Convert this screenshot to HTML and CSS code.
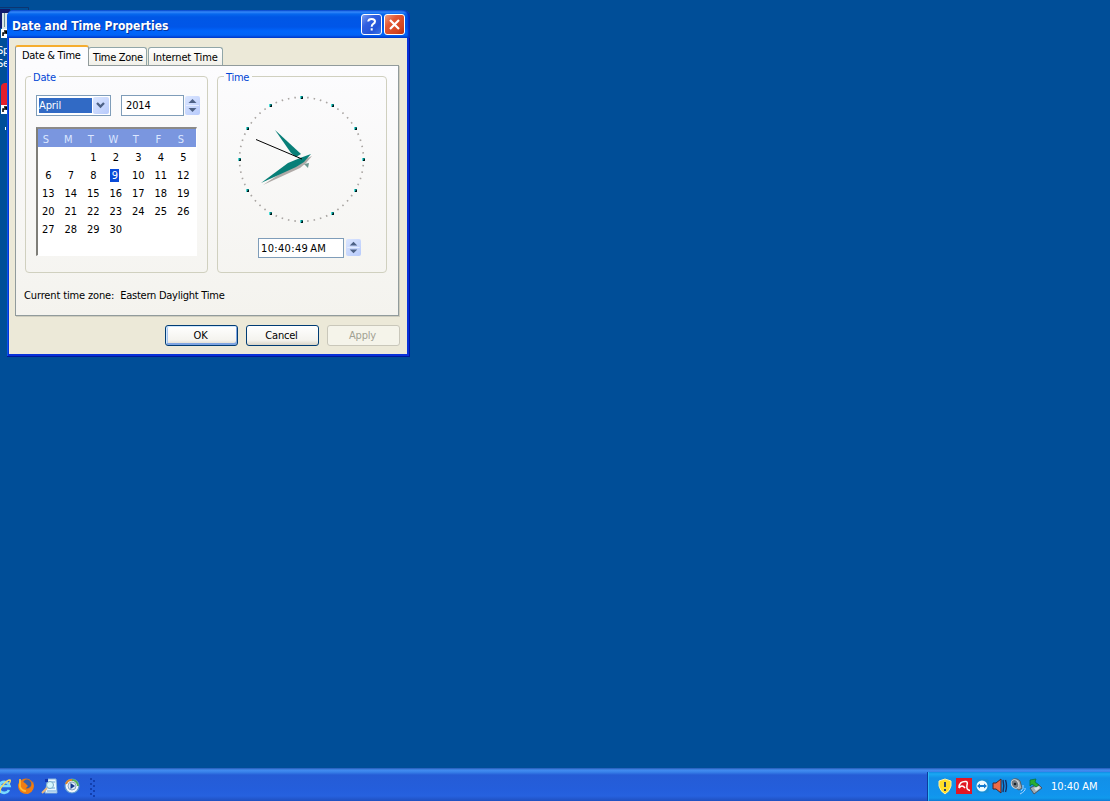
FILE: index.html
```html
<!DOCTYPE html>
<html lang="en">
<head>
<meta charset="utf-8">
<title>Date and Time Properties</title>
<link rel="stylesheet" href="styles.css">
</head>
<body>
<main class="desktop">
  <div class="shortcuts">
    <svg class="shortcut-art" width="30" height="140" viewBox="0 0 30 140">
      <path d="M0 7.500H28.500V11" fill="none" stroke="#102d63" stroke-opacity=".75"/>
      <path d="M0 9H10V28H0z" fill="#101b6b"/><path d="M2 13H8V29H2z" fill="#d8e6e8"/><path d="M4 13H5V27H4z" fill="#6d9196"/>
      <path d="M1 29H8V38H1z" fill="#fff"/><path d="M3 36V33H6V31M4 31H7V34" fill="none" stroke="#000" stroke-width="1.500"/>
      <path d="M1 86Q2 83 5 83H8V105H1z" fill="#e4202b"/>
      <path d="M1 105H8V114H1z" fill="#fff"/><path d="M3 112V109H6V107M4 107H7V110" fill="none" stroke="#000" stroke-width="1.500"/>
      <path d="M5 127H6V130H5z" fill="#fff"/>
    </svg>
    <div class="shortcut-label">Sp<br>Se</div>
  </div>

  <section class="window">
    <header class="titlebar">
      <h1 class="title">Date and Time Properties</h1>
      <div class="caption help"><svg width="19" height="19" viewBox="0 0 19 19"><path d="M6.200 6.500Q6.500 4 9.700 4Q13 4 13 6.600Q13 8.100 11 9.100Q9.700 9.900 9.700 11.800M9.700 13.200V15.400" fill="none" stroke="#fff" stroke-width="2"/></svg></div>
      <div class="caption close"><svg width="19" height="19" viewBox="0 0 19 19"><path d="M5 5L14 14M14 5L5 14" stroke="#fff" stroke-width="2.200"/></svg></div>
    </header>
    <div class="body">
      <nav class="tabs">
        <div class="tab active">Date &amp; Time</div>
        <div class="tab zone">Time Zone</div>
        <div class="tab internet">Internet Time</div>
      </nav>
      <div class="panel">
        <div class="groups">
          <div class="group date-group">
            <div class="legend">Date</div>
            <div class="pickers">
              <div class="combo"><span class="month">April</span><span class="drop"><svg width="15" height="17" viewBox="0 0 15 17"><path d="M4 6L7.500 9.500L11 6" fill="none" stroke="#4d6185" stroke-width="2.300"/></svg></span></div>
              <div class="field year">2014</div>
              <div class="spinner"><svg width="15" height="19" viewBox="0 0 15 19"><path d="M3.500 7L7.500 3L11.500 7zM3.500 12L7.500 16L11.500 12z" fill="#4d6185"/><path d="M1 9.500H14" stroke="#e6eeff"/></svg></div>
            </div>
            <div class="calendar">
              <div class="week head"><span>S</span><span>M</span><span>T</span><span>W</span><span>T</span><span>F</span><span>S</span></div>
              <div class="week"><span></span><span></span><span>1</span><span>2</span><span>3</span><span>4</span><span>5</span></div>
              <div class="week"><span>6</span><span>7</span><span>8</span><span><b class="today">9</b></span><span>10</span><span>11</span><span>12</span></div>
              <div class="week"><span>13</span><span>14</span><span>15</span><span>16</span><span>17</span><span>18</span><span>19</span></div>
              <div class="week"><span>20</span><span>21</span><span>22</span><span>23</span><span>24</span><span>25</span><span>26</span></div>
              <div class="week"><span>27</span><span>28</span><span>29</span><span>30</span></div>
            </div>
          </div>
          <div class="group time-group">
            <div class="legend">Time</div>
            <svg class="clock" width="132" height="132" viewBox="236 93 132 132">
              <circle cx="301.500" cy="159.300" r="62" fill="none" stroke="#aaa6a3" stroke-width="1.700" pathLength="60" stroke-dasharray="0 .88 .24 0 0 .76 .24 0 0 .76 .24 0 0 .76 .24 .88"/>
              <defs><g id="mark"><path d="M-2-1H0V2H-2z" fill="#4ed9d5"/><path d="M-1-1H1V1H-1z" fill="#087f7c"/><path d="M0 0H1V2H-1V1H0z" fill="#001b1c"/></g></defs>
              <use href="#mark" x="302" y="97"/><use href="#mark" x="333" y="105"/><use href="#mark" x="356" y="128"/><use href="#mark" x="364" y="159"/><use href="#mark" x="356" y="190"/><use href="#mark" x="333" y="213"/><use href="#mark" x="302" y="221"/><use href="#mark" x="271" y="213"/><use href="#mark" x="248" y="190"/><use href="#mark" x="240" y="159"/><use href="#mark" x="248" y="128"/><use href="#mark" x="271" y="105"/>
              <path d="M263 185L296 163L312 156L306 163L300 168z" fill="#b0aaa7"/>
              <path d="M304 164L309 163L308 168z" fill="#6d9790"/>
              <path d="M275 130L301 154L296 157L291 153z" fill="#087f78"/>
              <path d="M261 183L288 163L300 158L311 154L304 162L296 167z" fill="#087f78"/>
              <path d="M256 139.500L302 159" stroke="#000"/>
            </svg>
            <div class="time-row">
              <div class="field time-field">10:40:49 AM</div>
              <div class="spinner time-spin"><svg width="15" height="17" viewBox="0 0 15 18"><path d="M3.500 7L7.500 3L11.500 7zM3.500 11L7.500 15L11.500 11z" fill="#4d6185"/><path d="M1 9H14" stroke="#e6eeff"/></svg></div>
            </div>
          </div>
        </div>
        <div class="zone-line"><span>Current time zone:</span><span class="zone-name">Eastern Daylight Time</span></div>
      </div>
      <footer class="buttons">
        <div class="button default">OK</div>
        <div class="button">Cancel</div>
        <div class="button disabled">Apply</div>
      </footer>
    </div>
  </section>

  <div class="taskbar">
    <svg class="quick" width="104" height="33" viewBox="0 768 104 33">
      <path d="M9 790A5.500 5.500 0 1 1 9.500 786H0" fill="none" stroke="#78d9ff" stroke-width="2.600"/><path d="M0 793Q-1 789 3 785Q7 780 10 780Q11 781 9 784" fill="none" stroke="#f2d765" stroke-width="1.400"/>
      <circle cx="26" cy="786" r="7.500" fill="#ea7610"/><circle cx="27" cy="784" r="4.400" fill="#365fa9"/><path d="M20 780L25 783L28 786L25 789Q31 791 32 784L33 781Q36 791 28 794Q18 794 18 785z" fill="#f07d12"/><path d="M20 779V787Q22 791 26 791" fill="none" stroke="#ffbd35" stroke-width="1.700"/>
      <path d="M48 779H56L57 793H45z" fill="#eaf7ff" stroke="#8ab7dd"/><path d="M48 782H55M48 788H55M47 791H56" stroke="#66a5dc"/><circle cx="50" cy="785" r="3.500" fill="#d4f6ff" stroke="#7baac4"/><path d="M47 788L42 793" stroke="#e9b67c" stroke-width="2"/><path d="M45 779H48V782H45z" fill="#1236b0"/>
      <circle cx="72" cy="786" r="7" fill="#f0f5fa" stroke="#5b99d3" stroke-width="1.200"/><path d="M66 784A6 6 0 0 1 72 780" fill="none" stroke="#dc852f" stroke-width="2"/><path d="M72 780A6 6 0 0 1 78 786" fill="none" stroke="#58ae58" stroke-width="2"/><circle cx="72" cy="786" r="4" fill="#dceaf8" stroke="#89a5c4"/><path d="M70.500 783L75 786L70.500 789z" fill="#14388c"/>
      <path d="M90 778h2v2h-2zM93 780h2v2h-2zM90 783h2v2h-2zM93 785h2v2h-2zM90 788h2v2h-2zM93 790h2v2h-2zM90 793h2v2h-2zM93 795h2v2h-2z" fill="#123fae"/>
    </svg>
    <div class="tray">
      <svg width="119" height="29" viewBox="928 772 119 29">
        <path d="M945 779L951 781V786Q950 791 945 794Q940 791 939 786V781z" fill="#ffdf29" stroke="#fff0a5"/><path d="M945 782V787M945 789V791" stroke="#17346e" stroke-width="1.800"/>
        <path d="M956 778H972V794H956z" fill="#e21624"/><path d="M959 788Q959 781 966 781.500Q968 782 967 785Q966 790 970 790.500M959 788Q962 784 965 788" fill="none" stroke="#fff" stroke-width="1.500"/>
        <rect x="976" y="779" width="13" height="14" rx="3" fill="#168ed7"/><circle cx="982" cy="786" r="5.500" fill="#eefcff"/><path d="M977 786L980 783.500V785H984V783.500L987 786L984 788.500V787H980V788.500z" fill="#137bce"/>
        <path d="M993 783H996L1001 779V793L996 789H993z" fill="#ed6b46" stroke="#49252b"/><path d="M1003 780Q1004.500 786 1003 792M1005.500 780Q1007.500 786 1005.500 792" fill="none" stroke="#182f61" stroke-width="1.400"/>
        <path d="M1012 780Q1016 777 1020 781L1022 788L1019 790L1012 786z" fill="#a7adb0" stroke="#555e67"/><ellipse cx="1015" cy="784" rx="3.500" ry="4.500" fill="#737b82" stroke="#d4d8dd" transform="rotate(-25 1015 784)"/><circle cx="1015" cy="784" r="1.300" fill="#17212b"/><path d="M1021 791Q1024 789 1023 785M1020 794Q1026 791 1025 788" fill="none" stroke="#a9d4ff"/>
        <path d="M1030 788L1038 784L1042 788L1034 794z" fill="#a1adb4" stroke="#46566a"/><path d="M1034 788L1038 786L1040 788L1036 791z" fill="#dce4e7"/><path d="M1030 780L1036 779L1035 782L1039 785L1036 787L1032 784L1030 786z" fill="#29ad31" stroke="#087340" stroke-width=".8"/>
      </svg>
      <time class="tray-clock">10:40 AM</time>
    </div>
  </div>
</main>
</body>
</html>
```
FILE: styles.css
```css
* { box-sizing: border-box; }
body { margin: 0; font: 11px/13px "DejaVu Sans Condensed", "DejaVu Sans", sans-serif; font-stretch: condensed; letter-spacing: -.3px; color: #000; }
svg { display: block; flex: none; }
.desktop { position: relative; width: 1110px; height: 801px; overflow: hidden; background: #004e98; display: flex; flex-direction: column; justify-content: flex-end; }
.shortcuts { position: absolute; left: 0; top: 0; }
.shortcut-label { position: absolute; left: -3px; top: 44px; color: #fff; }

.window { position: absolute; left: 7px; top: 10px; width: 403px; height: 347px; padding: 0 3px 3px 2px; border-radius: 7px 7px 0 0; background: #0831d9; box-shadow: inset -1px -1px #001899, inset 1px 0 #0855e8; display: flex; flex-direction: column; }
.titlebar { height: 28px; margin: 0 -3px 0 -2px; padding: 4px 5px 0; border-radius: 7px 7px 0 0; display: flex; background: linear-gradient(#0a54d5, #3588fa 2px, #0668ee 4px, #0057e6 7px, #0056e8 17px, #0065fc 21px, #0263f6 25px, #003dce); box-shadow: inset -2px 0 2px #0030bb; }
.title { flex: 1; margin: 4px 0 0; font: bold 12px/16px "DejaVu Sans Condensed", "DejaVu Sans", sans-serif; letter-spacing: .02px; color: #fff; text-shadow: 1px 1px #06349d; white-space: nowrap; }
.caption { width: 21px; height: 21px; border: 1px solid #fff; border-radius: 3px; margin-left: 2px; }
.help { background: linear-gradient(135deg, #7d9ef0, #315fe0 35%, #2454d8 70%, #3c77e9); }
.close { background: linear-gradient(135deg, #ef9c80, #e35734 35%, #d54520 75%, #b92d10); }
.body { flex: 1; background: #ece9d8; padding: 7px 8px 0 6px; }
.tabs { height: 20px; display: flex; align-items: flex-end; }
.tab { height: 18px; padding: 3px 0 0 4px; border: 1px solid #91a6a8; border-bottom: 0; border-radius: 3px 3px 0 0; background: linear-gradient(#fff, #f1f0e9); white-space: nowrap; }
.tab.active { position: relative; z-index: 1; width: 74px; height: 21px; margin-bottom: -1px; padding: 1px 0 0 6px; border-color: #919b9c; border-top: 2px solid #f5ad30; background: #fcfcfe; }
.tab.active { padding-top: 2px; }
.zone { width: 59px; margin-left: -1px; }
.internet { width: 75px; margin-left: 1px; letter-spacing: -.15px; }
.panel { width: 384px; height: 251px; padding: 10px 10px 0 9px; border: 1px solid #919b9c; box-shadow: 1px 1px #cfcdbe; background: linear-gradient(#fcfcfe, #f4f3ee); }
.groups { display: flex; gap: 9px; }
.group { height: 197px; border: 1px solid #d0d0bf; border-radius: 4px; }
.date-group { width: 183px; padding-left: 10px; }
.time-group { width: 170px; display: flex; flex-direction: column; }
.legend { width: max-content; margin: -6px 0 0 -5px; padding: 0 3px 0 2px; background: #fbfbfd; color: #0046d5; letter-spacing: -.2px; }
.time-group .legend { margin-left: 6px; letter-spacing: -.25px; }
.pickers { height: 21px; margin-top: 11px; display: flex; }
.combo { width: 75px; height: 21px; border: 1px solid #7f9db9; background: #fff; padding: 2px 1px; display: flex; justify-content: space-between; }
.month { width: 53px; height: 15px; margin-left: 1px; padding: 1px 0; color: #fff; background: #316ac5; letter-spacing: -.1px; }
.drop, .spinner { background: linear-gradient(135deg, #dbe6ff, #b7cafb); border-radius: 2px; }
.drop { width: 16px; height: 17px; margin-top: -1px; }
.field { border: 1px solid #7f9db9; background: #fff; }
.year { width: 63px; margin-left: 10px; padding: 3px 4px; letter-spacing: -.15px; }
.spinner { width: 15px; height: 19px; margin: 1px 0 0 1px; }
.calendar { width: 161px; height: 129px; margin-top: 11px; border: 2px solid #fff; border-top-color: #8b8a88; border-left-color: #7f7e78; border-right-width: 1px; border-bottom-width: 1px; background: #fff; }
.week { height: 18px; display: grid; grid-template-columns: repeat(7, 22.5px); line-height: 19px; text-align: center; margin-left: -1px; letter-spacing: -.1px; }
.week.head { margin: 0 0 1px; color: #dce7ff; background: #7a96df; line-height: 21px; }
.head span { margin-left: -7px; }
.today { font-weight: normal; display: inline-block; width: 9px; height: 13px; line-height: 13px; color: #fff; background: #0a4bd8; margin-left: -2px; }
.clock { margin: 9px 0 0 18px; }
.time-row { display: flex; margin: 13px 0 0 40px; }
.time-field { width: 86px; height: 20px; padding: 3px 2px; white-space: nowrap; letter-spacing: .35px; word-spacing: -1.500px; }
.time-spin { height: 17px; margin: 1px 0 0 2px; }
.zone-line { display: flex; gap: 6px; margin: 16px 0 0 -1px; white-space: nowrap; letter-spacing: -.14px; }
.zone-name { letter-spacing: -.25px; }
.buttons { height: 30px; display: flex; justify-content: flex-end; gap: 8px; margin-right: -1px; padding-top: 9px; }
.button { width: 73px; height: 21px; border: 1px solid #003c74; border-radius: 3px; line-height: 20px; text-align: center; text-indent: -2px; letter-spacing: -.2px; background: linear-gradient(#fff, #f4f3ee 75%, #d9d4c7); }
.default { box-shadow: inset 1px 1px #cee7ff, inset -1px -2px #7fa5e2, inset 2px 0 #a9c5ee; }
.disabled { color: #a1a192; background: #f5f4ea; border-color: #c9c7ba; }

.taskbar { height: 33px; display: flex; justify-content: space-between; background: linear-gradient(#2458b5, #438cf0 2px, #3882ea 4px, #255cd6 7px, #245edc 22px, #2661df 28px, #1f50c0); }
.tray { width: 183px; height: 29px; align-self: flex-end; display: flex; align-items: center; border-left: 1px solid #0c3d9d; background: linear-gradient(#118ce5, #19a8f3 2px, #1290e8 6px, #1194ed 22px, #109aec 26px, #0d7ad5); box-shadow: inset 1px 0 #2fb8f6; }
.tray-clock { color: #fff; margin-left: 4px; white-space: nowrap; letter-spacing: -.05px; }
```
